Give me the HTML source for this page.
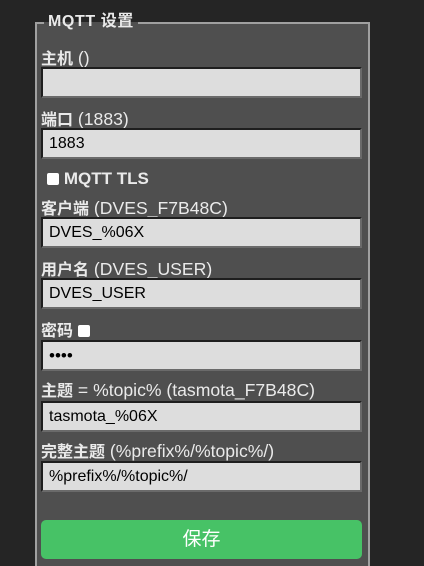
<!DOCTYPE html>
<html style="overflow:hidden;height:566px"><head><meta charset="utf-8"><style>
body{margin:0;background:#252525;width:424px;height:566px;overflow:hidden;position:relative;font-family:"Liberation Sans","Noto Sans CJK SC",sans-serif;color:#eaeaea;font-size:16px}
.fs{position:absolute;left:35px;top:22px;width:331px;height:544px;border:2px solid #a0a0a0;border-bottom:none;background:#4f4f4f}
.lg{position:absolute;left:44px;top:12px;padding:0 4px;background:linear-gradient(#252525 0,#252525 10px,#4f4f4f 10px);font-weight:bold;font-size:16px;line-height:20px;color:#eaeaea;letter-spacing:0.6px}
.l{position:absolute;left:41px;line-height:20px;white-space:nowrap;font-size:17.6px}
.l b{font-weight:bold;font-size:16px}
.in{position:absolute;left:41px;width:321px;height:31px;box-sizing:border-box;background:#dddddd;border-style:solid;border-width:2px;border-color:#1e1e1e #6a6a6a #6a6a6a #1e1e1e;color:#000;padding-left:6px;line-height:27px;font-size:16px}
.cb{display:inline-block;width:12px;height:12px;background:#fff;border-radius:2px;vertical-align:-1px}
.btn{position:absolute;left:41px;top:520px;width:321px;height:39px;background:#47c266;border-radius:5px;color:#fff;font-size:19px;text-align:center;line-height:39px}
</style></head><body>
<div class="fs"></div>
<div class="lg">MQTT 设置</div>
<div class="l" style="top:48px"><b>主机</b> ()</div>
<div class="in" style="top:67px"></div>
<div class="l" style="top:109px"><b>端口</b> (1883)</div>
<div class="in" style="top:128px">1883</div>
<div class="l" style="top:168px;left:47px"><span class="cb"></span> <b style="font-size:17px">MQTT TLS</b></div>
<div class="l" style="top:198px"><b>客户端</b> (DVES_F7B48C)</div>
<div class="in" style="top:217px">DVES_%06X</div>
<div class="l" style="top:259px"><b>用户名</b> (DVES_USER)</div>
<div class="in" style="top:278px">DVES_USER</div>
<div class="l" style="top:320px"><b>密码</b> <span class="cb"></span></div>
<div class="in" style="top:340px;font-size:17px;letter-spacing:0">••••</div>
<div class="l" style="top:380px"><b>主题</b> = %topic% (tasmota_F7B48C)</div>
<div class="in" style="top:401px">tasmota_%06X</div>
<div class="l" style="top:441px"><b>完整主题</b> (%prefix%/%topic%/)</div>
<div class="in" style="top:461px">%prefix%/%topic%/</div>
<div class="btn">保存</div>
</body></html>
